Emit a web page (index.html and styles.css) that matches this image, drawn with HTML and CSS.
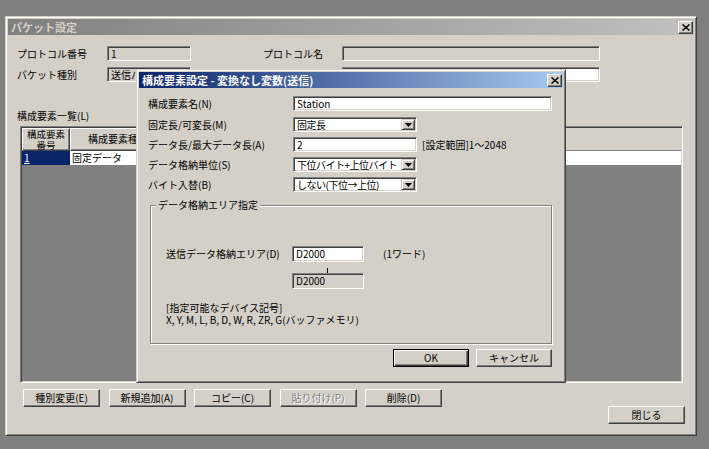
FILE: index.html
```html
<!DOCTYPE html>
<html lang="ja">
<head>
<meta charset="utf-8">
<title>パケット設定</title>
<link rel="stylesheet" href="styles.css">
</head>
<body>
<div class="desktop">
  <div class="window main-window">
    <div class="titlebar inactive">
      <span class="title">パケット設定</span>
      <span class="close-btn"><svg width="8" height="7" viewBox="0 0 8 7"><path d="M0.5 0.5 L7.5 6.5 M7.5 0.5 L0.5 6.5" stroke="#000" stroke-width="1.5"/></svg></span>
    </div>
    <div class="main-body">
      <div class="frow">
        <span class="lbl-a">プロトコル番号</span>
        <div class="field disabled w84">1</div>
        <span class="lbl-b">プロトコル名</span>
        <div class="field disabled w258"></div>
      </div>
      <div class="frow">
        <span class="lbl-a">パケット種別</span>
        <div class="field disabled w84">送信パケット</div>
        <span class="lbl-b">パケット名(K)</span>
        <div class="field w258"></div>
      </div>
      <div class="list-label">構成要素一覧(L)</div>
      <div class="listview">
        <div class="lv-header">
          <div class="lv-hcell c1">構成要素<br>番号</div>
          <div class="lv-hcell c2">構成要素種別</div>
          <div class="lv-hfill"></div>
        </div>
        <div class="lv-row">
          <div class="lv-cell c1 selected"><span class="focus">1</span></div>
          <div class="lv-cell c2">固定データ</div>
        </div>
      </div>
      <div class="btn-row">
        <button class="btn">種別変更(E)</button>
        <button class="btn">新規追加(A)</button>
        <button class="btn">コピー(C)</button>
        <button class="btn disabled-btn">貼り付け(P)</button>
        <button class="btn">削除(D)</button>
      </div>
      <div class="close-row">
        <button class="btn">閉じる</button>
      </div>
    </div>
  </div>

  <div class="window dialog">
    <div class="titlebar active">
      <span class="title">構成要素設定 - 変換なし変数(送信)</span>
      <span class="close-btn"><svg width="8" height="7" viewBox="0 0 8 7"><path d="M0.5 0.5 L7.5 6.5 M7.5 0.5 L0.5 6.5" stroke="#000" stroke-width="1.5"/></svg></span>
    </div>
    <div class="dlg-body">
      <div class="drow first">
        <span class="dlbl">構成要素名(N)</span>
        <div class="field w259">Station</div>
      </div>
      <div class="drow">
        <span class="dlbl">固定長/可変長(M)</span>
        <div class="field select w124"><span class="val">固定長</span><span class="dd"><svg width="7" height="4" viewBox="0 0 7 4"><path d="M0 0 H7 L3.5 4 Z" fill="#000"/></svg></span></div>
      </div>
      <div class="drow">
        <span class="dlbl">データ長/最大データ長(A)</span>
        <div class="field w124">2</div>
        <span class="hint">[設定範囲]1〜2048</span>
      </div>
      <div class="drow">
        <span class="dlbl">データ格納単位(S)</span>
        <div class="field select w124"><span class="val">下位バイト+上位バイト</span><span class="dd"><svg width="7" height="4" viewBox="0 0 7 4"><path d="M0 0 H7 L3.5 4 Z" fill="#000"/></svg></span></div>
      </div>
      <div class="drow">
        <span class="dlbl">バイト入替(B)</span>
        <div class="field select w124"><span class="val">しない(下位→上位)</span><span class="dd"><svg width="7" height="4" viewBox="0 0 7 4"><path d="M0 0 H7 L3.5 4 Z" fill="#000"/></svg></span></div>
      </div>
      <fieldset class="group">
        <legend>データ格納エリア指定</legend>
        <div class="grow">
          <span class="glbl">送信データ格納エリア(D)</span>
          <div class="field tall w72">D2000</div>
          <span class="unit">(1ワード)</span>
        </div>
        <div class="tick"></div>
        <div class="field tall disabled w72 indent">D2000</div>
        <p class="note">[指定可能なデバイス記号]<br>X, Y, M, L, B, D, W, R, ZR, G(バッファメモリ)</p>
      </fieldset>
      <div class="dlg-buttons">
        <button class="btn default">OK</button>
        <button class="btn">キャンセル</button>
      </div>
    </div>
  </div>
</div>
</body>
</html>
```

FILE: styles.css
```css
* { box-sizing: border-box; }
html, body { margin: 0; padding: 0; }
body {
  width: 709px;
  height: 449px;
  overflow: hidden;
  background: #808080;
  font-family: "Noto Sans CJK JP", "Noto Sans", sans-serif;
  font-size: 10px;
  line-height: 12px;
  color: #000;
}
.desktop {
  position: relative;
  width: 709px;
  height: 449px;
  padding: 16px 0 0 5px;
}

/* window frame */
.window {
  background: #d4d0c8;
  border: 1px solid;
  border-color: #d4d0c8 #404040 #404040 #d4d0c8;
  box-shadow: inset 1px 1px 0 #fff, inset -1px -1px 0 #808080;
  padding: 2px;
  display: flex;
  flex-direction: column;
}
.main-window { width: 692px; height: 420px; }

.titlebar {
  height: 16px;
  flex: none;
  display: flex;
  align-items: center;
  justify-content: space-between;
  padding: 0 1px 0 3px;
}
.titlebar.inactive { background: linear-gradient(to right, #808080, #c0c0c0); color: #d4d0c8; }
.titlebar.active { background: linear-gradient(to right, #0a246a, #a6caf0); color: #fff; }
.title { font-weight: bold; font-size: 11px; line-height: 14px; white-space: nowrap; }
.close-btn {
  width: 15px;
  height: 13px;
  background: #d4d0c8;
  border: 1px solid;
  border-color: #fff #404040 #404040 #fff;
  box-shadow: inset -1px -1px 0 #808080;
  display: flex;
  align-items: center;
  justify-content: center;
}

/* fields */
.field {
  height: 15px;
  background: #fff;
  border: 1px solid;
  border-color: #808080 #fff #fff #808080;
  box-shadow: inset 1px 1px 0 #404040, inset -1px -1px 0 #d4d0c8;
  padding: 0 3px;
  display: flex;
  align-items: center;
  white-space: nowrap;
  flex: none;
}
.field.tall { height: 16px; }
.field.disabled { background: #d4d0c8; }
.field.select { padding-right: 1px; justify-content: space-between; }
.field.select .val { letter-spacing: -0.5px; }
.dd {
  width: 14px;
  height: 11px;
  flex: none;
  background: #d4d0c8;
  border: 1px solid;
  border-color: #d4d0c8 #404040 #404040 #d4d0c8;
  box-shadow: inset 1px 1px 0 #fff, inset -1px -1px 0 #808080;
  display: flex;
  align-items: center;
  justify-content: center;
}
.w72 { width: 72px; }
.w84 { width: 84px; }
.w124 { width: 124px; }
.w258 { width: 258px; }
.w259 { width: 259px; }

/* buttons */
.btn {
  font: inherit;
  color: #000;
  width: 77px;
  height: 18px;
  padding: 0;
  margin: 0;
  background: #d4d0c8;
  border: 1px solid;
  border-color: #fff #404040 #404040 #fff;
  box-shadow: inset -1px -1px 0 #808080;
  text-align: center;
  flex: none;
}
.btn.default {
  border-color: #000;
  box-shadow: inset 1px 1px 0 #fff, inset -1px -1px 0 #404040, inset -2px -2px 0 #808080;
}
.btn.disabled-btn { color: #808080; text-shadow: 1px 1px 0 #fff; }

/* main window body */
.main-body {
  flex: 1;
  display: flex;
  flex-direction: column;
  padding: 11px 9px 0 9px;
}
.frow { display: flex; align-items: center; height: 15px; }
.frow + .frow { margin-top: 6px; }
.lbl-a { width: 90px; flex: none; white-space: nowrap; }
.lbl-b { width: 79px; margin-left: 72px; flex: none; white-space: nowrap; }
.list-label { margin-top: 28px; }

.listview {
  margin: 4px 0 0 3px;
  width: 663px;
  height: 257px;
  background: #808080;
  border: 1px solid;
  border-color: #808080 #fff #fff #808080;
  box-shadow: inset 1px 1px 0 #404040, inset -1px -1px 0 #d4d0c8;
  padding: 1px;
  display: flex;
  flex-direction: column;
  overflow: hidden;
}
.lv-header { display: flex; height: 23px; flex: none; background: #d4d0c8; }
.lv-hcell {
  border: 1px solid;
  border-color: #fff #404040 #404040 #fff;
  box-shadow: inset -1px -1px 0 #808080;
  display: flex;
  align-items: center;
  justify-content: center;
  text-align: center;
  line-height: 10.5px;
  white-space: nowrap;
  flex: none;
}
.lv-hcell.c1 { font-size: 9.5px; }
.lv-hfill { flex: 1; border-bottom: 1px solid #808080; }
.c1 { width: 48px; }
.c2 { width: 96px; }
.lv-row { display: flex; height: 14px; background: #fff; flex: none; }
.lv-cell { display: flex; align-items: center; padding-left: 2px; white-space: nowrap; flex: none; }
.lv-cell.selected { background: #0a246a; color: #fff; }
.focus { text-decoration: underline; }

.btn-row { display: flex; gap: 8.5px; margin: 6px 0 0 6px; }
.close-row { display: flex; justify-content: flex-end; margin-top: -1px; }

/* dialog */
.dialog {
  position: absolute;
  left: 136px;
  top: 69px;
  width: 430px;
  height: 314px;
}
.dlg-body {
  flex: 1;
  padding: 8px 11px 0 9px;
  display: flex;
  flex-direction: column;
}
.drow { display: flex; align-items: center; height: 15px; }
.drow + .drow { margin-top: 5px; }
.drow.first { margin-bottom: 1px; }
.dlbl { width: 145px; flex: none; white-space: nowrap; }
.hint { margin-left: 5px; white-space: nowrap; }

.group {
  margin: 7px 0 0 2px;
  width: 402px;
  padding: 0 0 17px 0;
  border: 1px solid #808080;
  box-shadow: inset 1px 1px 0 #fff, 1px 1px 0 #fff;
  min-width: 0;
}
.group legend {
  margin-left: 5px;
  padding: 0 2px;
  background: #d4d0c8;
  line-height: 12px;
}
.grow { display: flex; align-items: center; margin-top: 35px; padding-left: 15px; }
.glbl { width: 126px; flex: none; white-space: nowrap; }
.unit { margin-left: 19px; }
.tick { width: 1px; height: 5px; background: #000; margin: 6px 0 0 176px; }
.indent { margin-left: 141px; }
.note { margin: 13px 0 0 15px; white-space: nowrap; }

.dlg-buttons { display: flex; justify-content: flex-end; gap: 7px; margin-top: 5px; }
.dlg-buttons .btn { width: 76px; }
```
